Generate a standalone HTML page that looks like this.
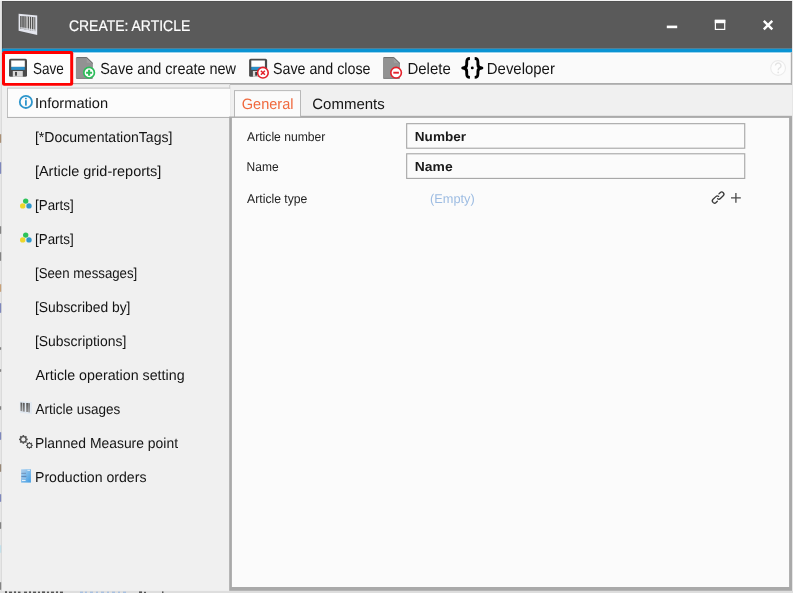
<!DOCTYPE html>
<html><head><meta charset="utf-8"><title>Create: Article</title>
<style>
html,body{margin:0;padding:0}
body{width:793px;height:593px;position:relative;overflow:hidden;background:#e6e6e6;font-family:"Liberation Sans",sans-serif}
.t{position:absolute;left:0;top:0;white-space:pre;line-height:1;transform-origin:0 0;font-family:"Liberation Sans",sans-serif;text-rendering:geometricPrecision}
svg#bx,svg#ic{position:absolute;left:0;top:0;width:793px;height:593px}
#txt{position:absolute;left:0;top:0;width:793px;height:593px;will-change:transform}

</style></head>
<body>
<svg id="bx" viewBox="0 0 793 593">
 <rect x="0" y="0" width="793" height="593" fill="#e6e6e6"/>
 <rect x="0" y="0" width="793" height="1.1" fill="#f4f4f4"/>
 <rect x="0" y="590.8" width="793" height="2.2" fill="#dedede"/>
 <rect x="2" y="1.1" width="790" height="589.7" fill="#f0f0f0"/>
 <rect x="2" y="1.1" width="790" height="47.7" fill="#5a5a5a"/>
 <rect x="2" y="1.1" width="790" height="0.9" fill="#4f4f4f"/>
 <rect x="2" y="1.1" width="0.9" height="47.7" fill="#4f4f4f"/>
 <rect x="2" y="52.2" width="790" height="30.8" fill="#fafafa"/>
 <rect x="2" y="52.3" width="790" height="1.6" fill="#ffffff"/>
 <rect x="2" y="48.7" width="790" height="3.7" fill="#0a93d3"/>
 <rect x="790.8" y="52.2" width="1.2" height="32.6" fill="#adadad"/>
 <rect x="2" y="83" width="228" height="1.2" fill="#acacac"/>
 <rect x="230" y="83" width="562" height="1.8" fill="#acacac"/>
 <rect x="7" y="87.6" width="223.2" height="30.3" fill="#c0c0c0"/>
 <rect x="7" y="116.9" width="223.2" height="1.0" fill="#b2b2b2"/>
 <rect x="8" y="88.6" width="222.2" height="28.3" fill="#fcfcfc"/>
 <rect x="229.2" y="84.8" width="1.0" height="3.6" fill="#cccccc"/>
 <rect x="234" y="90.1" width="67" height="26.9" fill="#b8b8b8"/>
 <rect x="235" y="91.1" width="65" height="25.9" fill="#fbfbfb"/>
 <rect x="301" y="115.8" width="491" height="1.2" fill="#ababab"/>
 <rect x="229.2" y="116.5" width="562.8" height="474.3" fill="#a9a9a9"/>
 <rect x="231.9" y="117.9" width="557.2" height="469.1" fill="#fbfbfb"/>
 <rect x="406.1" y="123.1" width="339.2" height="25.7" fill="#a8a8a8"/>
 <rect x="407.25" y="124.25" width="336.9" height="23.4" fill="#fbfbfb"/>
 <rect x="406.1" y="153.2" width="339.2" height="25.8" fill="#a8a8a8"/>
 <rect x="407.25" y="154.35" width="336.9" height="23.5" fill="#fbfbfb"/>
 <rect x="2" y="51" width="71.2" height="34.7" fill="#ff0000" rx="2.2"/>
 <rect x="5" y="54" width="65.2" height="28.9" fill="#fdfdfd" rx="0.4"/>
</svg>
<svg id="ic" viewBox="0 0 793 593">
 <defs>
  <g id="floppy">
   <rect x="0" y="0" width="18" height="18" rx="1.6" fill="#4b4b4b"/>
   <rect x="2.2" y="1.7" width="13.6" height="6.4" fill="#ffffff"/>
   <rect x="2.2" y="8.1" width="13.6" height="3" fill="#2a8fc9"/>
   <rect x="3.8" y="12.2" width="10" height="5.8" fill="#d9d9d9"/>
   <rect x="6.1" y="13.1" width="1.8" height="3.8" fill="#3a3a3a"/>
  </g>
  <g id="page">
   <path d="M1,0 H10.8 L17,6 V20.7 a1,1 0 0 1 -1,1 H1 a1,1 0 0 1 -1,-1 V1 a1,1 0 0 1 1,-1 Z" fill="#929292"/>
   <path d="M10.8,0 V5 a1,1 0 0 0 1,1 H17 Z" fill="#9e9e9e"/>
   <path d="M1,0.45 H10.6 L16.7,6.3" fill="none" stroke="#6a6a6a" stroke-width="0.9"/>
   <path d="M0.5,21.3 H16.5" stroke="#7c7c7c" stroke-width="0.9"/>
  </g>
  <g id="gearteeth">
   <rect x="-0.8" y="-4.35" width="1.6" height="8.7"/>
   <rect x="-0.8" y="-4.35" width="1.6" height="8.7" transform="rotate(45)"/>
   <rect x="-0.8" y="-4.35" width="1.6" height="8.7" transform="rotate(90)"/>
   <rect x="-0.8" y="-4.35" width="1.6" height="8.7" transform="rotate(135)"/>
  </g>
  <g id="parts">
   <circle cx="25.7" cy="201.1" r="2.7" fill="#2dc35a"/>
   <circle cx="22.7" cy="205.9" r="2.7" fill="#ecd72c"/>
   <circle cx="29.0" cy="205.9" r="2.7" fill="#2e96cc"/>
  </g>
 </defs>

 <!-- title barcode icon -->
 <polygon points="18.6,13.8 37.2,15.5 37.2,35.1 18.6,30.8" fill="#e4e6ee"/>
 <polygon points="20.3,15.9 35.4,17.3 35.4,31.3 20.3,28.5" fill="#757575"/>
 <g stroke="#b9b9b9" stroke-width="1.1">
  <line x1="21.9" y1="16.1" x2="21.9" y2="28.7"/>
  <line x1="24.2" y1="16.3" x2="24.2" y2="29.1"/>
  <line x1="27.6" y1="16.6" x2="27.6" y2="29.8"/>
  <line x1="33.6" y1="17.2" x2="33.6" y2="30.9"/>
 </g>
 <g stroke="#f2f2f2" stroke-width="0.8">
  <line x1="26" y1="16.5" x2="26" y2="29.5"/>
  <line x1="29.5" y1="16.8" x2="29.5" y2="30.1"/>
  <line x1="31.6" y1="17" x2="31.6" y2="30.5"/>
 </g>
 <g stroke="#505050" stroke-width="0.9">
  <line x1="20.8" y1="16" x2="20.8" y2="28.6"/>
  <line x1="23" y1="16.2" x2="23" y2="28.9"/>
  <line x1="25.1" y1="16.4" x2="25.1" y2="29.3"/>
  <line x1="28.6" y1="16.7" x2="28.6" y2="30"/>
  <line x1="30.5" y1="16.9" x2="30.5" y2="30.3"/>
  <line x1="32.6" y1="17.1" x2="32.6" y2="30.7"/>
 </g>
 <polygon points="20.3,27 35.4,29.6 35.4,31.4 20.3,28.6" fill="#dfe1e8" opacity=".75"/>

 <!-- window controls -->
 <rect x="666.8" y="25.6" width="10.4" height="2.6" fill="#fff"/>
 <rect x="715.4" y="20.4" width="9.3" height="9" fill="none" stroke="#fff" stroke-width="1.2"/>
 <rect x="714.8" y="19.8" width="10.5" height="3.4" fill="#fff"/>
 <path d="M763.8,20.8 L772.3,29.3 M772.3,20.8 L763.8,29.3" stroke="#fff" stroke-width="2.4" fill="none"/>

 <!-- help -->
 <circle cx="778.1" cy="68" r="7.4" fill="#fdfdfd" stroke="#ebebeb" stroke-width="1.1"/>
 <path d="M775.4,65.6 a2.8,2.6 0 1 1 4.2,2.3 q-1.4,0.9 -1.4,2.4" fill="none" stroke="#e4e4e4" stroke-width="1.4"/>
 <circle cx="778.2" cy="72.4" r="0.9" fill="#e4e4e4"/>

 <!-- toolbar icons -->
 <use href="#floppy" x="9" y="58.8"/>
 <use href="#page" x="75.9" y="57.1"/>
 <circle cx="89.1" cy="72.7" r="5.3" fill="#fff" stroke="#2dbd5a" stroke-width="1.7"/>
 <path d="M86.1,72.7 H92.1 M89.1,69.7 V75.7" stroke="#2dbd5a" stroke-width="2.1"/>
 <use href="#floppy" x="249.1" y="58.8"/>
 <circle cx="262.9" cy="72.7" r="5.3" fill="#fff" stroke="#e4202a" stroke-width="1.6"/>
 <path d="M260.9,70.7 L264.9,74.7 M264.9,70.7 L260.9,74.7" stroke="#e4202a" stroke-width="1.5"/>
 <use href="#page" x="383" y="57.1"/>
 <circle cx="396.1" cy="72.7" r="5.3" fill="#fff" stroke="#e4202a" stroke-width="1.6"/>
 <path d="M393.3,72.7 H398.9" stroke="#e4202a" stroke-width="1.9"/>
 <!-- braces -->
 <g fill="none" stroke="#000" stroke-width="2.9" stroke-linejoin="round">
  <path d="M469.9,58.5 C467,58.5 466.7,60 466.7,62.5 V64.4 C466.7,66.8 465.2,67.9 462.7,67.95 C465.2,68 466.7,69.1 466.7,71.5 V73.4 C466.7,75.9 467,77.4 469.9,77.4"/>
  <path d="M474.7,58.5 C477.6,58.5 477.9,60 477.9,62.5 V64.4 C477.9,66.8 479.4,67.9 481.9,67.95 C479.4,68 477.9,69.1 477.9,71.5 V73.4 C477.9,75.9 477.6,77.4 474.7,77.4"/>
 </g>
 <circle cx="472.3" cy="67.9" r="1.45" fill="#000"/>

 <!-- info icon -->
 <circle cx="25.9" cy="101.9" r="6.1" fill="none" stroke="#2e96cc" stroke-width="1.8"/>
 <rect x="25" y="100.2" width="1.8" height="5.4" fill="#2e96cc"/>
 <rect x="25" y="97.8" width="1.8" height="1.5" fill="#2e96cc"/>

 <!-- parts icons -->
 <use href="#parts"/>
 <use href="#parts" y="34"/>

 <!-- article usages (small barcode) -->
 <linearGradient id="bg2" x1="0" y1="0" x2="0" y2="1"><stop offset="0" stop-color="#555"/><stop offset="1" stop-color="#8e8e8e"/></linearGradient>
 <polygon points="19.75,401.2 31.9,402 31.9,414.3 19.75,412.75" fill="#e2e9f1"/>
 <g fill="url(#bg2)">
  <polygon points="20.5,402.6 22.1,402.7 22.1,411.3 20.5,411.1"/>
  <polygon points="22.7,402.7 24.7,402.9 24.7,411.7 22.7,411.4"/>
  <polygon points="26.2,403 28,403.1 28,412.1 26.2,411.9"/>
  <polygon points="28.3,403.1 29.8,403.2 29.8,412.4 28.3,412.2"/>
 </g>

 <!-- gears -->
 <g fill="#505050">
  <g transform="translate(23.35,439.4)"><use href="#gearteeth"/><circle r="3.35"/><circle r="2.05" fill="#f0f0f0"/></g>
  <g transform="translate(29.4,445.4) scale(0.78)"><use href="#gearteeth"/><circle r="3.35"/><circle r="2.05" fill="#f0f0f0"/></g>
 </g>

 <!-- production orders doc -->
 <linearGradient id="dg" x1="0" y1="0" x2="1" y2="1"><stop offset="0" stop-color="#b4d6f2"/><stop offset="1" stop-color="#3f9be2"/></linearGradient>
 <rect x="21.1" y="469.2" width="9.8" height="13.4" fill="url(#dg)"/>
 <g stroke-width="1">
  <line x1="21.4" y1="471" x2="26" y2="471" stroke="#9cc0e4"/>
  <line x1="21.4" y1="473.3" x2="26" y2="473.3" stroke="#6e90ba"/>
  <line x1="21.4" y1="476.4" x2="26.4" y2="476.4" stroke="#5f84b2"/>
  <line x1="21.4" y1="478.4" x2="26" y2="478.4" stroke="#9cc0e4"/>
  <line x1="22" y1="480.4" x2="25.6" y2="480.4" stroke="#f4f8fc"/>
  <line x1="27.4" y1="470.3" x2="30" y2="470.3" stroke="#e4f0fb"/>
 </g>

 <!-- link + plus -->
 <g fill="none" stroke="#3a3a3a" stroke-width="1.3" stroke-linecap="round">
  <path d="M-0.2,-2.2 H1.5 A2.2,2.2 0 0 1 1.5,2.2 H-2.4 A2.2,2.2 0 0 1 -4.57,0.38" transform="translate(720.6,195.3) rotate(-44)"/>
  <path d="M-0.2,-2.2 H1.5 A2.2,2.2 0 0 1 1.5,2.2 H-2.4 A2.2,2.2 0 0 1 -4.57,0.38" transform="translate(715.65,199.85) rotate(136)"/>
 </g>
 <path d="M731,197.9 H740.8 M735.9,193 V202.8" stroke="#4a4a4a" stroke-width="1.3" fill="none"/>


 <!-- left edge specks of underlying app -->
 <g opacity=".55"><rect x="0" y="134" width="1.4" height="9" rx="0.8" fill="#7a4a1a"/><rect x="0" y="162" width="1.4" height="12" rx="0.8" fill="#2a3a9a"/><rect x="0" y="226" width="1.4" height="8" rx="0.8" fill="#333"/><rect x="0" y="252" width="1.4" height="9" rx="0.8" fill="#333"/><rect x="0" y="284" width="1.4" height="8" rx="0.8" fill="#b06a20"/><rect x="0" y="303" width="1.4" height="10" rx="0.8" fill="#2a3a9a"/><rect x="0" y="347" width="1.4" height="3" rx="0.8" fill="#333"/><rect x="0" y="369" width="1.4" height="3" rx="0.8" fill="#333"/><rect x="0" y="406" width="1.4" height="4" rx="0.8" fill="#333"/><rect x="0" y="432" width="1.4" height="8" rx="0.8" fill="#2a3a9a"/><rect x="0" y="464" width="1.4" height="8" rx="0.8" fill="#5a3a1a"/><rect x="0" y="494" width="1.4" height="8" rx="0.8" fill="#2a3a9a"/><rect x="0" y="522" width="1.4" height="7" rx="0.8" fill="#333"/><rect x="0" y="545" width="1.4" height="8" rx="0.8" fill="#a8dcee"/><rect x="0" y="582" width="1.4" height="8" rx="0.8" fill="#333"/></g>
 <rect x="1.4" y="1.1" width="0.6" height="589.7" fill="#d4d4d4"/>
 <!-- underlying app bits at bottom/left -->
 <g fill="#333" opacity=".8">
  <rect x="5" y="591.2" width="2" height="1.8"/><rect x="9" y="591.6" width="3" height="1.4"/><rect x="14" y="591.4" width="2" height="1.6"/><rect x="18" y="591.6" width="2.5" height="1.4"/>
  <rect x="24" y="591.6" width="3" height="1.4"/><rect x="29" y="591.4" width="2" height="1.6"/><rect x="33" y="591.6" width="3" height="1.4"/><rect x="38" y="591.6" width="2" height="1.4"/><rect x="42" y="591.4" width="3" height="1.6"/>
  <rect x="47" y="591.6" width="2" height="1.4"/><rect x="51" y="591.6" width="3" height="1.4"/><rect x="56" y="591.4" width="2" height="1.6"/><rect x="60" y="591.6" width="3" height="1.4"/>
  <rect x="139" y="591.4" width="3" height="1.6"/><rect x="144" y="591.8" width="2" height="1.2"/><rect x="162" y="591.4" width="1.5" height="1.6"/>
 </g>
 <g fill="#a8c0e0"><rect x="80" y="591.6" width="3" height="1.4"/><rect x="85" y="591.6" width="2" height="1.4"/><rect x="90" y="591.6" width="3" height="1.4"/><rect x="96" y="591.6" width="2" height="1.4"/><rect x="101" y="591.6" width="3" height="1.4"/><rect x="107" y="591.6" width="2" height="1.4"/><rect x="112" y="591.6" width="3" height="1.4"/><rect x="118" y="591.6" width="2" height="1.4"/><rect x="123" y="591.6" width="3" height="1.4"/></g>
</svg>

<div id="txt">
<span class="t" style="-webkit-text-stroke:0.2px #fff;font-size:15.4px;color:#ffffff;font-weight:400;transform:translate(68.92px,19px) scaleX(0.9074)">CREATE: ARTICLE</span>
<span class="t" style="font-size:16px;color:#141414;font-weight:400;transform:translate(32.97px,62px) scaleX(0.8457)">Save</span>
<span class="t" style="font-size:16px;color:#141414;font-weight:400;transform:translate(100.22px,62px) scaleX(0.9037)">Save and create new</span>
<span class="t" style="font-size:16px;color:#141414;font-weight:400;transform:translate(272.93px,62px) scaleX(0.8917)">Save and close</span>
<span class="t" style="font-size:16px;color:#141414;font-weight:400;transform:translate(407.43px,62px) scaleX(0.9356)">Delete</span>
<span class="t" style="font-size:16px;color:#141414;font-weight:400;transform:translate(486.83px,62px) scaleX(0.9329)">Developer</span>
<span class="t" style="font-size:14.4px;color:#141414;font-weight:400;transform:translate(34.93px,97px) scaleX(1.0165)">Information</span>
<span class="t" style="font-size:14.4px;color:#141414;font-weight:400;transform:translate(34.92px,131px) scaleX(0.9766)">[*DocumentationTags]</span>
<span class="t" style="font-size:14.4px;color:#141414;font-weight:400;transform:translate(34.89px,165px) scaleX(1.0073)">[Article grid-reports]</span>
<span class="t" style="font-size:14.4px;color:#141414;font-weight:400;transform:translate(34.97px,199px) scaleX(0.9316)">[Parts]</span>
<span class="t" style="font-size:14.4px;color:#141414;font-weight:400;transform:translate(34.97px,233px) scaleX(0.9316)">[Parts]</span>
<span class="t" style="font-size:14.4px;color:#141414;font-weight:400;transform:translate(34.98px,267px) scaleX(0.9199)">[Seen messages]</span>
<span class="t" style="font-size:14.4px;color:#141414;font-weight:400;transform:translate(34.94px,301px) scaleX(0.9625)">[Subscribed by]</span>
<span class="t" style="font-size:14.4px;color:#141414;font-weight:400;transform:translate(34.93px,335px) scaleX(0.9676)">[Subscriptions]</span>
<span class="t" style="font-size:14.4px;color:#141414;font-weight:400;transform:translate(35.50px,369px) scaleX(0.9913)">Article operation setting</span>
<span class="t" style="font-size:14.4px;color:#141414;font-weight:400;transform:translate(35.50px,403px) scaleX(0.9389)">Article usages</span>
<span class="t" style="font-size:14.4px;color:#141414;font-weight:400;transform:translate(34.99px,437px) scaleX(0.9663)">Planned Measure point</span>
<span class="t" style="font-size:14.4px;color:#141414;font-weight:400;transform:translate(34.97px,471px) scaleX(0.9817)">Production orders</span>
<span class="t" style="font-size:15px;color:#f0683c;font-weight:400;transform:translate(241.77px,97px) scaleX(0.9681)">General</span>
<span class="t" style="font-size:15px;color:#141414;font-weight:400;transform:translate(312.25px,97px) scaleX(0.9993)">Comments</span>
<span class="t" style="font-size:12.7px;color:#222;font-weight:400;transform:translate(247.10px,131px) scaleX(0.9571)">Article number</span>
<span class="t" style="font-size:12.7px;color:#222;font-weight:400;transform:translate(246.55px,161px) scaleX(0.9457)">Name</span>
<span class="t" style="font-size:12.7px;color:#222;font-weight:400;transform:translate(247.10px,193px) scaleX(0.9606)">Article type</span>
<span class="t" style="font-size:13px;color:#1a1a1a;font-weight:700;transform:translate(414.82px,130px) scaleX(1.0425)">Number</span>
<span class="t" style="font-size:13px;color:#1a1a1a;font-weight:700;transform:translate(414.80px,160px) scaleX(1.0686)">Name</span>
<span class="t" style="font-size:12.7px;color:#9dbce2;font-weight:400;transform:translate(430.04px,193px) scaleX(1.0070)">(Empty)</span>
</div>
</body></html>
